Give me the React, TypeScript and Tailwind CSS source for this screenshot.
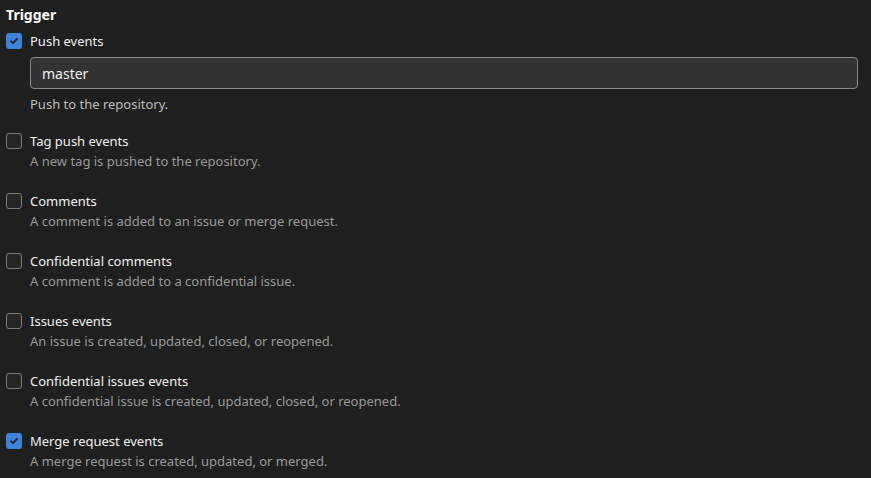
import React from "react";

const Check = ({ checked }: { checked: boolean }) =>
  checked ? (
    <div className="w-4 h-4 rounded-[3px] bg-[#3c83dc] flex items-center justify-center shrink-0">
      <svg width="10" height="10" viewBox="0 0 10 10">
        <path d="M2 5.2 L4.1 7.2 L8 2.8" stroke="#1f1f1f" strokeWidth="1.8" fill="none" strokeLinecap="round" strokeLinejoin="round" />
      </svg>
    </div>
  ) : (
    <div className="w-4 h-4 rounded-[3px] border border-[#7a7a7a] bg-[#262626] shrink-0" />
  );

const items = [
  { label: "Tag push events", desc: "A new tag is pushed to the repository.", checked: false },
  { label: "Comments", desc: "A comment is added to an issue or merge request.", checked: false },
  { label: "Confidential comments", desc: "A comment is added to a confidential issue.", checked: false },
  { label: "Issues events", desc: "An issue is created, updated, closed, or reopened.", checked: false },
  { label: "Confidential issues events", desc: "A confidential issue is created, updated, closed, or reopened.", checked: false },
  { label: "Merge request events", desc: "A merge request is created, updated, or merged.", checked: true },
];

export default function App() {
  return (
    <div className="w-[871px] h-[478px] bg-[#1f1f1f] text-[#f0f0f0] overflow-hidden px-[6px] pt-[5px]" style={{ fontFamily: '"Noto Sans", sans-serif' }}>
      <div className="text-[14px] font-bold leading-[20px] text-white">Trigger</div>
      <div className="flex items-center gap-2 mt-[6px] h-[20px]">
        <Check checked />
        <span className="text-[13px] leading-[20px]">Push events</span>
      </div>
      <div className="ml-[24px] mr-[7px] mt-[6px] h-[32px] rounded-[4px] border border-[#8a8a8a] bg-[#333333] flex items-center px-[11px] text-[14px]">
        master
      </div>
      <div className="ml-[24px] mt-[5px] text-[13px] leading-[20px] text-[#bdbdbd]">Push to the repository.</div>
      <div className="mt-[17px] flex flex-col gap-[20px]">
        {items.map((it) => (
          <div key={it.label}>
            <div className="flex items-center gap-2 h-[20px]">
              <Check checked={it.checked} />
              <span className="text-[13px] leading-[20px]">{it.label}</span>
            </div>
            <div className="ml-[24px] text-[13px] leading-[20px] text-[#9a9a9a]">{it.desc}</div>
          </div>
        ))}
      </div>
    </div>
  );
}
